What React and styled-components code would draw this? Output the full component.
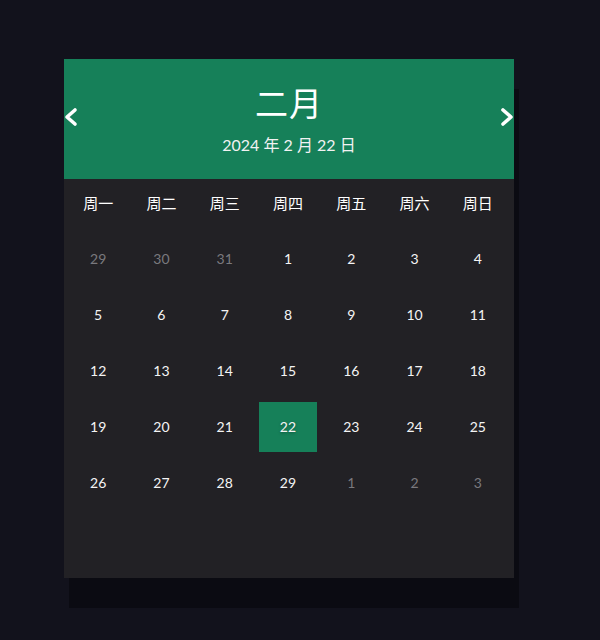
import React from "react"
import styled, { createGlobalStyle } from "styled-components"

const GlobalStyle = createGlobalStyle`
  body {
    margin: 0;
    background: #12121c;
    font-family: Lato, "Noto Sans CJK SC", sans-serif;
  }
`
const Page = styled.div`
  width: 600px;
  height: 640px;
  padding: 59px 0 0 64px;
  box-sizing: border-box;
`
const Card = styled.div`
  width: 450px;
  height: 519px;
  background: #222125;
  box-shadow: 5px 30px 0 #0b0b12;
`
const Header = styled.header`
  height: 120px;
  background: #168059;
  display: flex;
  align-items: center;
  justify-content: space-between;
  color: #fff;
`
const Arrow = styled.button`
  background: none;
  border: none;
  padding: 0;
  margin-top: -4px;
  width: 14px;
  height: 20px;
  display: flex;
  cursor: pointer;
`
const Titles = styled.div`
  display: flex;
  flex-direction: column;
  align-items: center;
`
const Month = styled.h1`
  margin: 0;
  font-size: 33px;
  font-weight: 400;
  line-height: 40px;
  letter-spacing: 1px;
`
const DateLine = styled.div`
  margin-top: 12px;
  font-size: 16px;
  line-height: 20px;
  color: #f2f2f2;
`
const Grid = styled.div`
  display: grid;
  grid-template-columns: repeat(7, 1fr);
  grid-auto-rows: 50px;
  column-gap: 5px;
  row-gap: 6px;
  padding: 0 7px 0 5px;
  margin-top: -1px;
`
const WeekDay = styled.div`
  display: flex;
  align-items: center;
  justify-content: center;
  padding-bottom: 2px;
  color: #fff;
  font-size: 15px;
`
const Day = styled.div`
  display: flex;
  align-items: center;
  justify-content: center;
  padding-bottom: 2px;
  font-size: 14px;
  color: ${(p) => (p.$muted ? "#7a797e" : "#f4f4f4")};
  background: ${(p) => (p.$active ? "#168059" : "transparent")};
  text-shadow: ${(p) => (p.$active ? "0 1px 3px rgba(0,0,0,0.35)" : "none")};
`

const Chevron = ({ dir }) => (
  <svg width="14" height="20" viewBox="0 0 14 20">
    <polyline
      points={dir === "left" ? "11,3 3,10 11,17" : "3,3 11,10 3,17"}
      fill="none"
      stroke="#fff"
      strokeWidth="3.6"
      strokeLinecap="round"
      strokeLinejoin="round"
    />
  </svg>
)

const weekDays = ["周一", "周二", "周三", "周四", "周五", "周六", "周日"]

const days = [
  ...[29, 30, 31].map((d) => ({ d, muted: true })),
  ...Array.from({ length: 29 }, (_, i) => ({ d: i + 1 })),
  ...[1, 2, 3].map((d) => ({ d, muted: true })),
]

export default function App() {
  return (
    <>
      <GlobalStyle />
      <Page>
        <Card>
          <Header>
            <Arrow aria-label="上个月">
              <Chevron dir="left" />
            </Arrow>
            <Titles>
              <Month>二月</Month>
              <DateLine>2024 年 2 月 22 日</DateLine>
            </Titles>
            <Arrow aria-label="下个月">
              <Chevron dir="right" />
            </Arrow>
          </Header>
          <Grid>
            {weekDays.map((w) => (
              <WeekDay key={w}>{w}</WeekDay>
            ))}
            {days.map((x, i) => (
              <Day key={i} $muted={x.muted} $active={!x.muted && x.d === 22}>
                {x.d}
              </Day>
            ))}
          </Grid>
        </Card>
      </Page>
    </>
  )
}
